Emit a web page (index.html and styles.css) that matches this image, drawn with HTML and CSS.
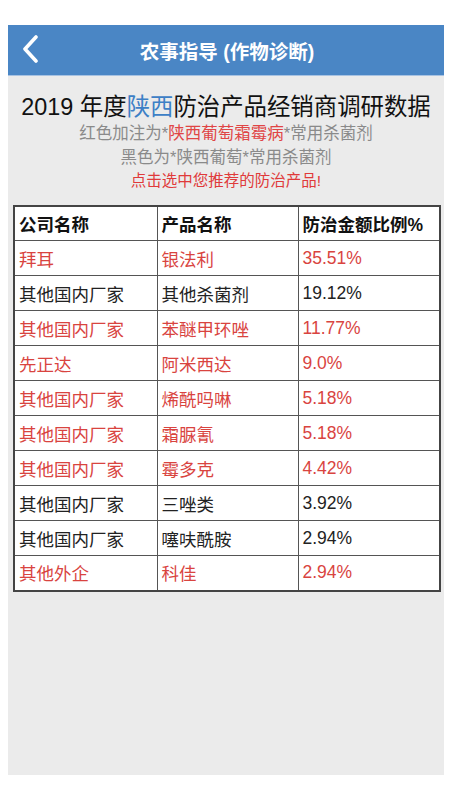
FILE: index.html
```html
<!DOCTYPE html>
<html lang="zh">
<head>
<meta charset="utf-8">
<link rel="stylesheet" href="styles.css">
</head>
<body>
<div class="frame">
  <div class="navbar">
    <svg class="back" width="18" height="28" viewBox="0 0 18 28"><path d="M14 2 L3 14 L14 26" fill="none" stroke="#fff" stroke-width="3.6" stroke-linecap="round" stroke-linejoin="round"/></svg>
    <div class="nav-title">农事指导 (作物诊断)</div>
  </div>
  <div class="intro">
    <div class="title">2019 年度<span class="blue">陕西</span>防治产品经销商调研数据</div>
    <div class="sub">红色加注为*<span class="red">陕西葡萄霜霉病</span>*常用杀菌剂</div>
    <div class="sub">黑色为*陕西葡萄*常用杀菌剂</div>
    <div class="hint">点击选中您推荐的防治产品!</div>
  </div>
  <table class="data">
    <colgroup><col class="c1"><col class="c2"><col class="c3"></colgroup>
    <thead>
      <tr><th>公司名称</th><th>产品名称</th><th>防治金额比例%</th></tr>
    </thead>
    <tbody>
      <tr class="r"><td>拜耳</td><td>银法利</td><td>35.51%</td></tr>
      <tr><td>其他国内厂家</td><td>其他杀菌剂</td><td>19.12%</td></tr>
      <tr class="r"><td>其他国内厂家</td><td>苯醚甲环唑</td><td>11.77%</td></tr>
      <tr class="r"><td>先正达</td><td>阿米西达</td><td>9.0%</td></tr>
      <tr class="r"><td>其他国内厂家</td><td>烯酰吗啉</td><td>5.18%</td></tr>
      <tr class="r"><td>其他国内厂家</td><td>霜脲氰</td><td>5.18%</td></tr>
      <tr class="r"><td>其他国内厂家</td><td>霉多克</td><td>4.42%</td></tr>
      <tr><td>其他国内厂家</td><td>三唑类</td><td>3.92%</td></tr>
      <tr><td>其他国内厂家</td><td>噻呋酰胺</td><td>2.94%</td></tr>
      <tr class="r"><td>其他外企</td><td>科佳</td><td>2.94%</td></tr>
    </tbody>
  </table>
</div>
</body>
</html>
```
FILE: styles.css
```css
html, body {
  margin: 0;
  padding: 0;
  background: #fff;
}
body {
  font-family: "Liberation Sans", "Noto Sans CJK SC", sans-serif;
  padding: 25px 6px 25px 8px;
}
.frame {
  width: 436px;
  height: 750px;
  background: #ebebeb;
  box-sizing: border-box;
  padding: 0 5px 0 5px;
  display: flex;
  flex-direction: column;
  align-items: stretch;
}
.navbar {
  margin: 0 -5px;
  height: 51px;
  background: #4a86c5;
  border-bottom: 1px solid #a7c2e2;
  box-sizing: border-box;
  display: flex;
  align-items: center;
  justify-content: center;
  position: relative;
}
.back {
  position: absolute;
  left: 14px;
  top: 10px;
}
.nav-title {
  color: #fff;
  font-size: 19.5px;
  font-weight: bold;
  margin-left: 2px;
}
.intro {
  text-align: center;
  padding-top: 16px;
}
.title {
  font-size: 23.4px;
  line-height: 30px;
  color: #111;
}
.blue { color: #3d80c6; }
.sub {
  font-size: 16.5px;
  line-height: 23.5px;
  color: #8a8a8a;
}
.red { color: #e04545; }
.hint {
  font-size: 15.5px;
  line-height: 23.5px;
  color: #e03a3a;
}
.data {
  margin-top: 12px;
  width: 426px;
  border-collapse: collapse;
  table-layout: fixed;
  background: #fff;
  border: 2px solid #444;
}
.c1 { width: 143px; }
.c2 { width: 141px; }
.c3 { width: 142px; }
.data th, .data td {
  border: 1.5px solid #555;
  height: 35px;
  box-sizing: border-box;
  padding: 0 0 0 4px;
  text-align: left;
  font-size: 17.5px;
  color: #222;
  white-space: nowrap;
}
.data th {
  font-weight: bold;
  color: #111;
}
.data tr.r td {
  color: #d9443f;
}
```
